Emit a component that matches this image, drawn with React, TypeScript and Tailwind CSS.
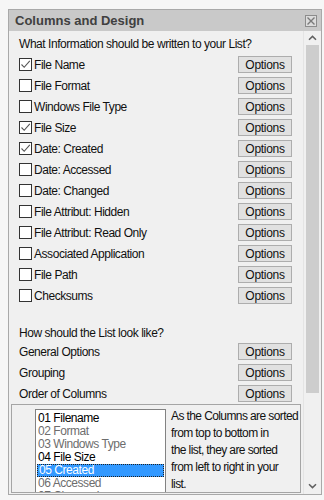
import React from "react";

const FONT = { fontFamily: '"Liberation Sans", Arial, sans-serif' };

const columns: { label: string; checked: boolean }[] = [
  { label: "File Name", checked: true },
  { label: "File Format", checked: false },
  { label: "Windows File Type", checked: false },
  { label: "File Size", checked: true },
  { label: "Date: Created", checked: true },
  { label: "Date: Accessed", checked: false },
  { label: "Date: Changed", checked: false },
  { label: "File Attribut: Hidden", checked: false },
  { label: "File Attribut: Read Only", checked: false },
  { label: "Associated Application", checked: false },
  { label: "File Path", checked: false },
  { label: "Checksums", checked: false },
];

const order: { label: string; active: boolean; selected?: boolean }[] = [
  { label: "01 Filename", active: true },
  { label: "02 Format", active: false },
  { label: "03 Windows Type", active: false },
  { label: "04 File Size", active: true },
  { label: "05 Created", active: true, selected: true },
  { label: "06 Accessed", active: false },
  { label: "07 Changed", active: false },
];

function OptionsButton() {
  return (
    <button className="ml-auto mr-[11px] flex h-[17px] w-[54px] items-center justify-center border border-[#adadad] bg-[#e1e1e1] text-[12px] leading-none tracking-[-0.3px] text-[#111]">
      Options
    </button>
  );
}

function Checkbox({ checked }: { checked: boolean }) {
  return (
    <span className="flex h-[13px] w-[13px] shrink-0 items-center justify-center border border-[#333] bg-white">
      {checked && (
        <svg width="11" height="11" viewBox="0 0 11 11">
          <path d="M1.5 5.5 L4.2 8.3 L9.8 1.8" fill="none" stroke="#555" strokeWidth="1.1" />
        </svg>
      )}
    </span>
  );
}

function Chevron({ down }: { down?: boolean }) {
  return (
    <svg width="9" height="6" viewBox="0 0 9 6">
      <path
        d={down ? "M1 1.2 L4.5 4.6 L8 1.2" : "M1 4.8 L4.5 1.4 L8 4.8"}
        fill="none"
        stroke="#606060"
        strokeWidth="1.5"
      />
    </svg>
  );
}

export default function App() {
  return (
    <div className="h-[500px] w-[324px] overflow-hidden bg-[#f6f6f6] pl-[8px] pt-[9px]" style={FONT}>
      <div className="flex h-[486px] w-[314px] flex-col border border-[#a9a9a9] bg-[#f0f0f0]">
        <div className="flex h-[21px] shrink-0 items-center bg-[#c9c9c9] pl-[6px] pr-[4px]">
          <span className="text-[13px] font-bold text-[#404040]">Columns and Design</span>
          <span className="ml-auto flex h-[12px] w-[12px] items-center justify-center border border-[#8c8c8c] bg-[#dcdcdc]">
            <svg width="10" height="10" viewBox="0 0 10 10">
              <path d="M1.5 1.5 L8.5 8.5 M8.5 1.5 L1.5 8.5" stroke="#7a7a7a" strokeWidth="1.4" />
            </svg>
          </span>
        </div>

        <div className="flex min-h-0 flex-1">
          <div className="flex w-[294px] flex-col text-[12px] tracking-[-0.45px] text-[#111]">
            <div className="pl-[10px] pt-[2px]">
              <div className="flex h-[21px] items-center">What Information should be written to your List?</div>
              {columns.map((c) => (
                <div key={c.label} className="flex h-[21px] items-center">
                  <Checkbox checked={c.checked} />
                  <span className="ml-[2px]">{c.label}</span>
                  <OptionsButton />
                </div>
              ))}
              <div className="h-[18px]" />
              <div className="flex h-[17px] items-center">How should the List look like?</div>
              {["General Options", "Grouping", "Order of Columns"].map((l) => (
                <div key={l} className="flex h-[21px] items-center">
                  <span>{l}</span>
                  <OptionsButton />
                </div>
              ))}
            </div>

            <div className="mx-[2px] flex h-[89px] overflow-hidden border border-[#a5a5a5] bg-[#f0f0f0]">
              <div className="ml-[23px] mt-[4px] w-[131px] shrink-0 border-l border-r border-t border-[#828282] bg-white pt-[2px] leading-[13px]">
                {order.map((o) => (
                  <div
                    key={o.label}
                    className={
                      o.selected
                        ? "mx-[1px] flex h-[13px] items-center border border-dotted border-[#222] bg-[#3399ff] pl-[1px] text-white"
                        : o.active
                          ? "flex h-[13px] items-center pl-[2px] text-black"
                          : "flex h-[13px] items-center pl-[2px] text-[#6d6d6d]"
                    }
                  >
                    {o.label}
                  </div>
                ))}
              </div>
              <div className="ml-[5px] pt-[3px] leading-[17px] tracking-[-0.6px]">
                <div className="whitespace-nowrap">As the Columns are sorted</div>
                <div className="whitespace-nowrap">from top to bottom in</div>
                <div className="whitespace-nowrap">the list, they are sorted</div>
                <div className="whitespace-nowrap">from left to right in your</div>
                <div className="whitespace-nowrap">list.</div>
              </div>
            </div>
          </div>

          <div className="flex w-[18px] flex-col items-center border-l border-[#e4e4e4] bg-[#f0f0f0]">
            <div className="flex h-[14px] w-full items-center justify-center">
              <Chevron />
            </div>
            <div className="h-[348px] w-[13px] bg-[#cdcdcd]" />
            <div className="flex-1" />
            <div className="flex h-[16px] w-full items-center justify-center">
              <Chevron down />
            </div>
          </div>
        </div>
      </div>
    </div>
  );
}
